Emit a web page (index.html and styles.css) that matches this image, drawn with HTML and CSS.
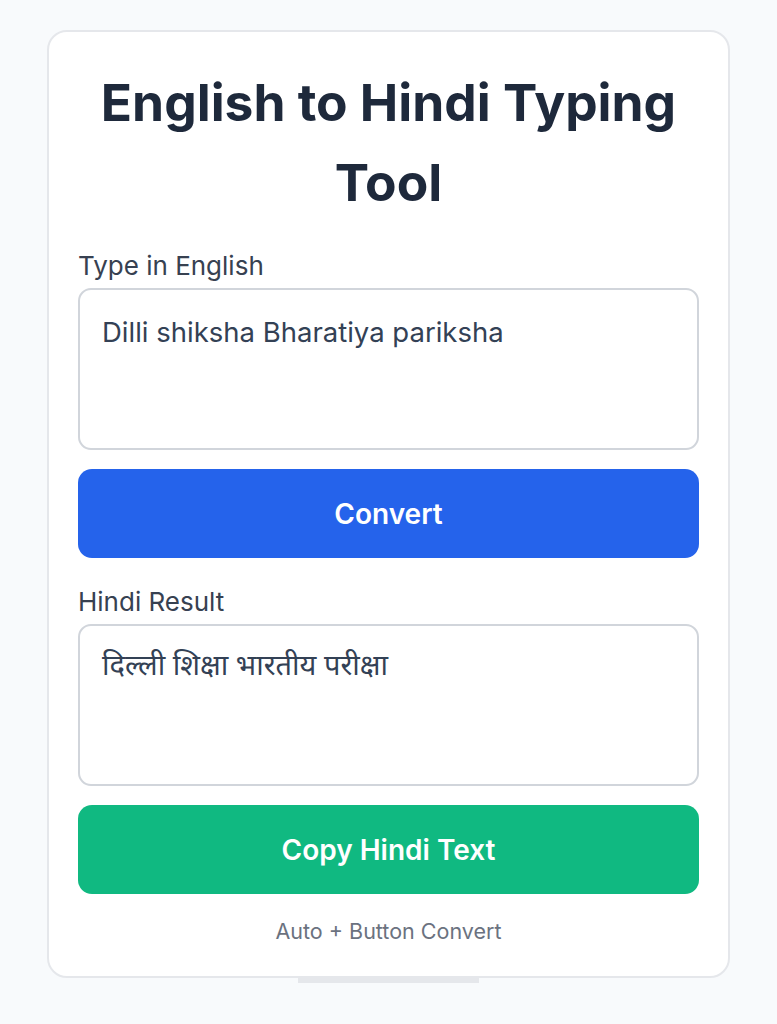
FILE: index.html
```html
<!DOCTYPE html>
<html lang="en">
<head>
<meta charset="utf-8">
<title>English to Hindi Typing Tool</title>
<link rel="stylesheet" href="styles.css">
</head>
<body>
<main class="page">
  <section class="card">
    <h1 class="title">English to Hindi Typing Tool</h1>
    <label class="label" for="eng">Type in English</label>
    <textarea id="eng" class="box">Dilli shiksha Bharatiya pariksha</textarea>
    <button class="btn btn-blue" type="button">Convert</button>
    <label class="label" for="hin">Hindi Result</label>
    <textarea id="hin" class="box box-hindi" readonly>दिल्ली शिक्षा भारतीय परीक्षा</textarea>
    <button class="btn btn-green" type="button">Copy Hindi Text</button>
    <p class="note">Auto + Button Convert</p>
  </section>
  <div class="handle"></div>
</main>
</body>
</html>
```
FILE: styles.css
```css
* { box-sizing: border-box; }
html, body {
  margin: 0;
  padding: 0;
  background: #f8fafc;
  font-family: Inter, "Noto Sans", "Noto Sans Devanagari", sans-serif;
}
.page {
  display: flex;
  flex-direction: column;
  align-items: center;
  padding-top: 30px;
}
.card {
  width: 683px;
  background: #ffffff;
  border: 2px solid #e5e7eb;
  border-radius: 20px;
  padding: 30px 29px 33px;
  display: flex;
  flex-direction: column;
}
.title {
  margin: 0 0 29px;
  font-size: 51.5px;
  line-height: 80px;
  font-weight: 700;
  color: #1e293b;
  text-align: center;
  letter-spacing: 0;
}
.label {
  font-size: 26px;
  line-height: 30px;
  color: #374151;
  margin-bottom: 7px;
}
.box {
  display: block;
  width: 100%;
  height: 162px;
  border: 2px solid #d1d5db;
  border-radius: 13px;
  padding: 23px 22px;
  font-family: Inter, "Noto Sans", sans-serif;
  font-size: 27.5px;
  line-height: 39px;
  color: #334155;
  resize: none;
  background: #fff;
  outline: none;
}
.box-hindi {
  font-family: "Noto Sans Devanagari", "Noto Sans", sans-serif;
  font-size: 29px;
}
.btn {
  display: block;
  width: 100%;
  height: 89px;
  border: none;
  border-radius: 14px;
  margin-top: 19px;
  font-family: Inter, sans-serif;
  font-size: 28px;
  font-weight: 600;
  color: #ffffff;
}
.btn-blue { background: #2563eb; margin-bottom: 29px; }
.btn-green { background: #10b981; }
.note {
  margin: 25px 0 0;
  text-align: center;
  font-size: 21.5px;
  line-height: 24px;
  color: #6b7280;
}
.handle {
  width: 181px;
  height: 5px;
  background: #e5e7eb;
}
```
